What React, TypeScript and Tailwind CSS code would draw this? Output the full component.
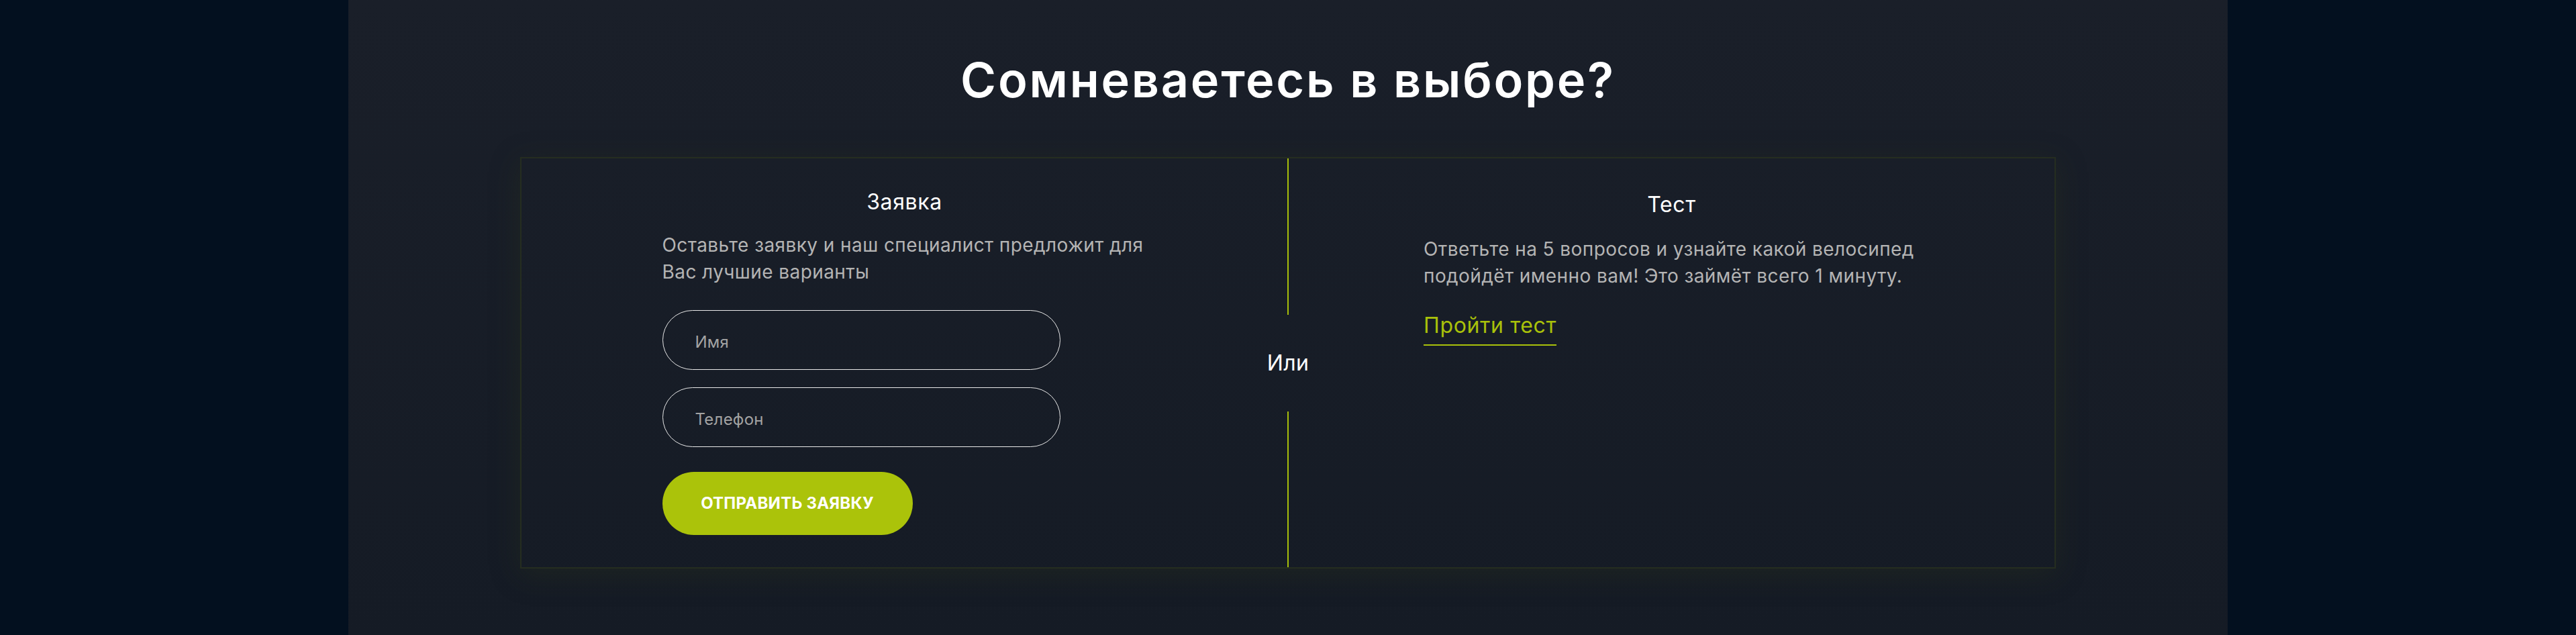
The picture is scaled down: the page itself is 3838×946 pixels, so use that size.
import React from "react";

export default function App() {
  const font = { fontFamily: "Inter, 'Noto Sans', sans-serif" };
  return (
    <div className="w-full h-[946px] bg-[#03101f] flex justify-center" style={font}>
      <div className="w-[2800px] h-full bg-gradient-to-b from-[#1a1f29] to-[#151b25] flex flex-col items-center">
        <h1 className="pt-[75px] text-[72px] leading-[88px] font-semibold text-white tracking-[0.038em]">
          Сомневаетесь в выборе?
        </h1>
        <div className="mt-[71px] w-[2288px] h-[613px] border-2 border-[#252d20] shadow-[0_8px_40px_rgba(45,55,25,0.35)] grid grid-cols-[1fr_2px_1fr]">
          {/* Left: form */}
          <div className="pt-[45px]">
            <div className="w-[722px] mx-auto flex flex-col">
              <h2 className="text-center text-[32px] leading-[40px] text-white font-normal tracking-[0.02em]">Заявка</h2>
              <p className="mt-6 text-[28px] leading-[40px] text-[#b4b4b4] tracking-[0.015em]">
                Оставьте заявку и наш специалист предложит для Вас лучшие варианты
              </p>
              <div className="mt-[37px] w-[593px] h-[89px] rounded-full border-[1.5px] border-[#e8e8e8] flex items-center pl-[48px] pt-1.5">
                <span className="text-[24px] text-[#a3a3a3] tracking-[0.01em]">Имя</span>
              </div>
              <div className="mt-[26px] w-[593px] h-[89px] rounded-full border-[1.5px] border-[#e8e8e8] flex items-center pl-[48px] pt-1.5">
                <span className="text-[24px] text-[#a3a3a3] tracking-[0.01em]">Телефон</span>
              </div>
              <button className="mt-[37px] w-[373px] h-[94px] rounded-full bg-[#abc30a] text-white text-[24px] font-bold uppercase tracking-[0.01em] flex items-center justify-center">
                Отправить заявку
              </button>
            </div>
          </div>
          {/* Divider */}
          <div className="flex flex-col items-center">
            <div className="w-[2px] h-[233px] bg-[#a6bd0a]" />
            <div className="h-[144px] flex items-center whitespace-nowrap text-[32px] text-white tracking-[0.01em]">Или</div>
            <div className="w-[2px] flex-1 bg-[#a6bd0a]" />
          </div>
          {/* Right: test */}
          <div className="pt-[49px]">
            <div className="w-[739px] mx-auto flex flex-col items-start">
              <h2 className="self-stretch text-center text-[32px] leading-[40px] text-white font-normal tracking-[0.02em]">Тест</h2>
              <p className="mt-[26px] text-[28px] leading-[40px] text-[#b4b4b4] tracking-[0.015em]">
                Ответьте на 5 вопросов и узнайте какой велосипед подойдёт именно вам! Это займёт всего 1 минуту.
              </p>
              <a className="mt-[34px] text-[32px] leading-[40px] text-[#a9c10a] tracking-[0.02em] pb-[8px] border-b-2 border-[#a9c10a]">
                Пройти тест
              </a>
            </div>
          </div>
        </div>
      </div>
    </div>
  );
}
